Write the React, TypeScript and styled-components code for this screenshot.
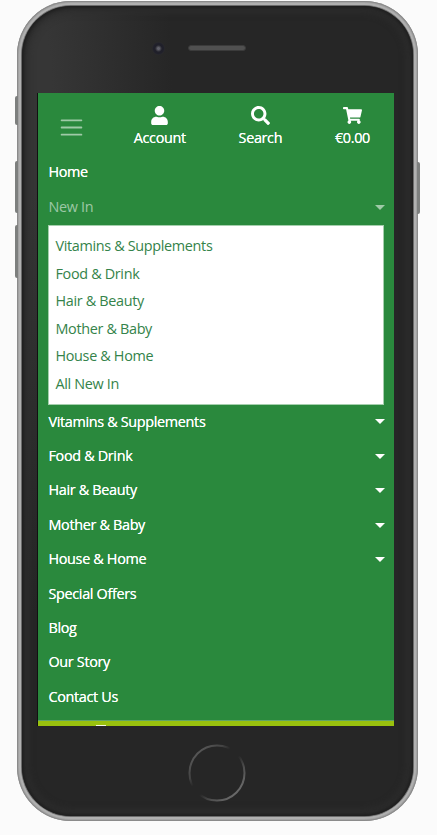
import React from "react";
import styled, { createGlobalStyle } from "styled-components";
import { FaSearch, FaShoppingCart, FaUser } from "react-icons/fa";

const GlobalStyle = createGlobalStyle`
  *, *::before, *::after { box-sizing: border-box; }
  html, body { margin: 0; height: 100%; background: #fbfbfb; overflow: hidden; }
  body { font-family: "Open Sans", "Noto Sans", sans-serif; font-size: 14.4px; line-height: 1.5; letter-spacing: -0.33px; }
`;

const Stage = styled.main`
  height: 835px;
  padding: 1px 19px 0 17px;
`;

const Phone = styled.div`
  position: relative;
  width: 401px;
  height: 820px;
  padding: 5px;
  border-radius: 54px;
  background: #b0b0b0;
  box-shadow: inset 0 0 0 1px #8b8b8b, inset 0 0 0 2px #a2a2a2;
`;

const SideButton = styled.span<{ $side: "left" | "right"; $top: number; $height: number }>`
  position: absolute;
  ${(p) => p.$side}: -2px;
  top: ${(p) => p.$top}px;
  width: 3px;
  height: ${(p) => p.$height}px;
  border-radius: ${(p) => (p.$side === "left" ? "2px 0 0 2px" : "0 2px 2px 0")};
  background: #7d7f7e;
`;

const Bezel = styled.div`
  display: grid;
  grid-template-rows: 87px 633px 1fr;
  height: 810px;
  padding: 0 19px 0 16px;
  border-radius: 49px;
  background: radial-gradient(ellipse 150px 520px at 0 90px, #363636 20%, #262626 100%);
  box-shadow: 0 0 0 1px #6c6c6c, inset 0 0 3px 2px #1f1f1f, inset 0 0 7px 6px #2d2d2d;
`;

const Earpiece = styled.div`
  display: grid;
  grid-template-columns: 14px 58px;
  column-gap: 22px;
  align-items: center;
  justify-content: start;
  height: 14px;
  margin: 35px 0 0 114px;
`;

const Camera = styled.span`
  display: block;
  width: 13px;
  height: 13px;
  border-radius: 50%;
  background: radial-gradient(circle, #60606a 0 1px, #45454d 2px, #20202a 3.5px, #20202a 5px, #29292d 6.5px);
`;

const Speaker = styled.span`
  height: 6px;
  border-radius: 3px;
  border: 1px solid #3b3b3b;
  background: #505050;
`;

const Screen = styled.section`
  display: flex;
  flex-direction: column;
  overflow: hidden;
  background: #2a893d;
  box-shadow: -1px 0 0 #111;
  color: #fff;
`;

const Toolbar = styled.header`
  display: flex;
  justify-content: space-between;
  flex: none;
  height: 62px;
  padding: 13px 24px 0 20px;
`;

const Toggler = styled.button`
  display: block;
  width: 27px;
  height: 27px;
  margin: 8px -4px 0 0;
  padding: 0;
  border: 0;
  background: none;
  color: rgba(255, 255, 255, 0.55);
  svg { display: block; width: 27px; height: 27px; }
`;

const Action = styled.a`
  display: flex;
  flex-direction: column;
  align-items: center;
  line-height: 24px;
  text-shadow: 0 0 0.4px currentColor;
  svg { display: block; margin-bottom: 0.5px; }
`;

const Menu = styled.nav`
  flex: none;
  padding: 0 10px 0 10.5px;
`;

const MenuRow = styled.a<{ $active?: boolean }>`
  display: flex;
  align-items: center;
  justify-content: space-between;
  height: 34.4px;
  color: ${(p) => (p.$active ? "rgba(255,255,255,0.55)" : "#fff")};
  text-shadow: ${(p) => (p.$active ? "none" : "0 0 0.4px currentColor")};
`;

const Caret = styled.span`
  border: 5px solid transparent;
  border-top-color: currentColor;
  border-bottom: 0;
  margin: 1px -0.5px 0 0;
`;

const Submenu = styled.div`
  height: 180px;
  margin: 1.5px 0 -1px -0.5px;
  padding: 6px 6.5px;
  border: 1px solid #a5cfad;
  background: #fff;
`;

const SubmenuRow = styled.a`
  display: flex;
  align-items: center;
  height: 27.56px;
  color: #34834a;
`;

const Banner = styled.div`
  flex: none;
  height: 6px;
  margin-top: auto;
  padding: 4px 0 0 58px;
  border-top: 1px solid #62a466;
  background: #99c10e;
`;

const BannerMark = styled.span`
  display: block;
  width: 10px;
  height: 1px;
  background: #f4f8df;
`;

const Footer = styled.div`
  display: flex;
  justify-content: center;
  padding: 18px 0 0 2px;
`;

const HomeButton = styled.svg`
  display: block;
  width: 58px;
  height: 58px;
`;

const departments = ["Vitamins & Supplements", "Food & Drink", "Hair & Beauty", "Mother & Baby", "House & Home"];
const pages = ["Special Offers", "Blog", "Our Story", "Contact Us"];

export default function App() {
  return (
    <Stage>
      <GlobalStyle />
      <Phone>
        <SideButton $side="left" $top={95} $height={29} />
        <SideButton $side="left" $top={160} $height={52} />
        <SideButton $side="left" $top={224} $height={53} />
        <SideButton $side="right" $top={161} $height={52} />
        <Bezel>
          <Earpiece>
            <Camera />
            <Speaker />
          </Earpiece>
          <Screen>
            <Toolbar>
              <Toggler aria-label="Menu">
                <svg viewBox="0 0 30 30" fill="none" stroke="currentColor" strokeWidth="2" strokeLinecap="round">
                  <path d="M4 7h22M4 15h22M4 23h22" />
                </svg>
              </Toggler>
              <Action><FaUser size={19} />Account</Action>
              <Action><FaSearch size={19} />Search</Action>
              <Action><FaShoppingCart size={19} />€0.00</Action>
            </Toolbar>
            <Menu>
              <MenuRow>Home</MenuRow>
              <MenuRow $active>New In<Caret /></MenuRow>
              <Submenu>
                {[...departments, "All New In"].map((name) => (
                  <SubmenuRow key={name}>{name}</SubmenuRow>
                ))}
              </Submenu>
              {departments.map((name) => (
                <MenuRow key={name}>{name}<Caret /></MenuRow>
              ))}
              {pages.map((name) => (
                <MenuRow key={name}>{name}</MenuRow>
              ))}
            </Menu>
            <Banner><BannerMark /></Banner>
          </Screen>
          <Footer>
            <HomeButton viewBox="0 0 58 58" fill="none">
              <defs>
                <linearGradient id="ring" x1="0" y1="0" x2="1" y2="1">
                  <stop offset="0.1" stopColor="#5a5a5a" />
                  <stop offset="0.3" stopColor="#444" />
                  <stop offset="0.4" stopColor="#262626" />
                  <stop offset="0.54" stopColor="#262626" />
                  <stop offset="0.68" stopColor="#4c4c4c" />
                  <stop offset="0.9" stopColor="#707070" />
                </linearGradient>
              </defs>
              <circle cx="29" cy="29" r="27.5" stroke="url(#ring)" strokeWidth="2" />
            </HomeButton>
          </Footer>
        </Bezel>
      </Phone>
    </Stage>
  );
}
